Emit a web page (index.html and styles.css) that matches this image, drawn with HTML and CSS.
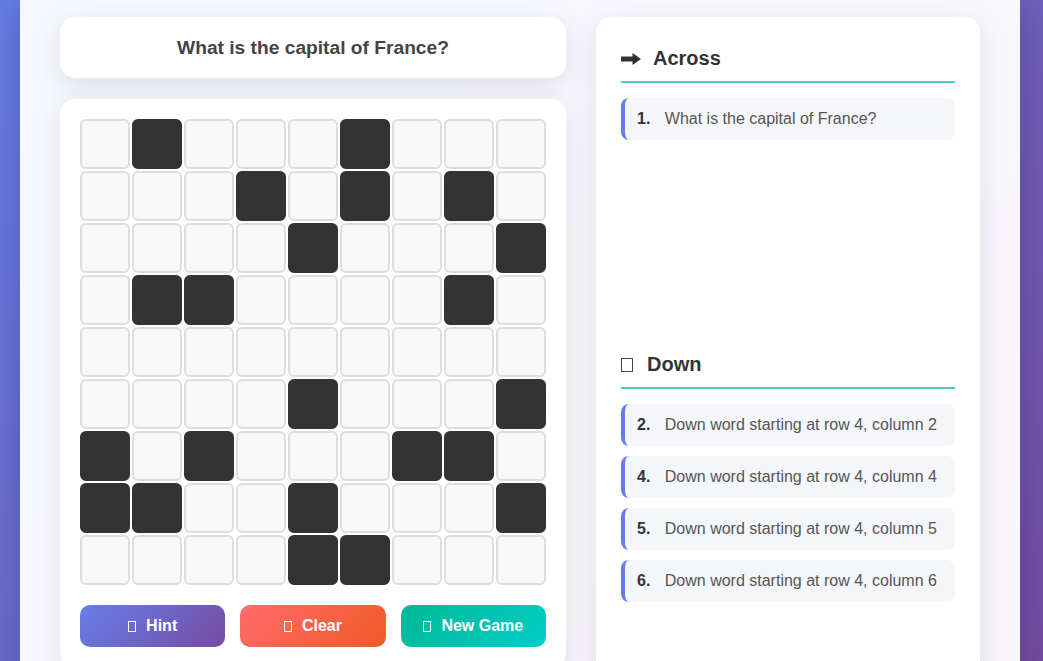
FILE: index.html
```html
<!DOCTYPE html>
<html lang="en">
<head>
<meta charset="utf-8">
<title>Crossword</title>
<link rel="stylesheet" href="styles.css">
</head>
<body>
<div class="container">
  <div class="game">
    <div class="left">
      <div class="card question">What is the capital of France?</div>
      <div class="card board">
        <div class="grid">
          <div class="cell"></div><div class="cell black"></div><div class="cell"></div><div class="cell"></div><div class="cell"></div><div class="cell black"></div><div class="cell"></div><div class="cell"></div><div class="cell"></div>
          <div class="cell"></div><div class="cell"></div><div class="cell"></div><div class="cell black"></div><div class="cell"></div><div class="cell black"></div><div class="cell"></div><div class="cell black"></div><div class="cell"></div>
          <div class="cell"></div><div class="cell"></div><div class="cell"></div><div class="cell"></div><div class="cell black"></div><div class="cell"></div><div class="cell"></div><div class="cell"></div><div class="cell black"></div>
          <div class="cell"></div><div class="cell black"></div><div class="cell black"></div><div class="cell"></div><div class="cell"></div><div class="cell"></div><div class="cell"></div><div class="cell black"></div><div class="cell"></div>
          <div class="cell"></div><div class="cell"></div><div class="cell"></div><div class="cell"></div><div class="cell"></div><div class="cell"></div><div class="cell"></div><div class="cell"></div><div class="cell"></div>
          <div class="cell"></div><div class="cell"></div><div class="cell"></div><div class="cell"></div><div class="cell black"></div><div class="cell"></div><div class="cell"></div><div class="cell"></div><div class="cell black"></div>
          <div class="cell black"></div><div class="cell"></div><div class="cell black"></div><div class="cell"></div><div class="cell"></div><div class="cell"></div><div class="cell black"></div><div class="cell black"></div><div class="cell"></div>
          <div class="cell black"></div><div class="cell black"></div><div class="cell"></div><div class="cell"></div><div class="cell black"></div><div class="cell"></div><div class="cell"></div><div class="cell"></div><div class="cell black"></div>
          <div class="cell"></div><div class="cell"></div><div class="cell"></div><div class="cell"></div><div class="cell black"></div><div class="cell black"></div><div class="cell"></div><div class="cell"></div><div class="cell"></div>
        </div>
        <div class="controls">
          <button class="btn btn-hint"><span class="tofu"></span>Hint</button>
          <button class="btn btn-clear"><span class="tofu"></span>Clear</button>
          <button class="btn btn-new"><span class="tofu"></span>New Game</button>
        </div>
      </div>
    </div>
    <div class="card clues">
      <section class="clue-section">
        <h3 class="clue-heading"><svg class="arrow" width="20" height="12" viewBox="0 0 20 12"><path d="M0 3.5H11.5V0L20 6L11.5 12V8.5H0Z" fill="#333"/></svg>Across</h3>
        <ul class="clue-list">
          <li class="clue"><span class="num">1.</span> What is the capital of France?</li>
        </ul>
      </section>
      <section class="clue-section">
        <h3 class="clue-heading"><span class="tofu tofu-dark"></span>Down</h3>
        <ul class="clue-list">
          <li class="clue"><span class="num">2.</span> Down word starting at row 4, column 2</li>
          <li class="clue"><span class="num">4.</span> Down word starting at row 4, column 4</li>
          <li class="clue"><span class="num">5.</span> Down word starting at row 4, column 5</li>
          <li class="clue"><span class="num">6.</span> Down word starting at row 4, column 6</li>
        </ul>
      </section>
    </div>
  </div>
</div>
</body>
</html>
```

FILE: styles.css
```css
* {
  box-sizing: border-box;
}

html, body {
  margin: 0;
  padding: 0;
}

body {
  font-family: "Liberation Sans", Arial, sans-serif;
  background: linear-gradient(135deg, #667eea 0%, #764ba2 100%);
  min-height: 100vh;
  padding: 0 20px;
  color: #333;
}

.container {
  width: 1000px;
  background: rgba(255, 255, 255, 0.95);
  box-shadow: 0 0 40px rgba(0, 0, 0, 0.22);
  padding: 17px 40px 40px;
}

.game {
  display: grid;
  grid-template-columns: 1fr 384px;
  gap: 30px;
}

.left {
  display: flex;
  flex-direction: column;
  gap: 21px;
}

.card {
  background: #fff;
  border-radius: 15px;
  box-shadow: 0 8px 30px rgba(0, 0, 0, 0.1);
}

.question {
  height: 61px;
  padding: 20px 20px 0;
  text-align: center;
  font-size: 19.2px;
  font-weight: bold;
  line-height: 22px;
  color: #444;
}

.board {
  padding: 20px;
}

.grid {
  display: grid;
  grid-template-columns: repeat(9, 50px);
  grid-auto-rows: 50px;
  gap: 2px;
}

.cell {
  background: #f9f9f9;
  border: 2px solid #ddd;
  border-radius: 6px;
}

.cell.black {
  background: #333;
  border-color: #333;
}

.controls {
  display: flex;
  gap: 15px;
  margin-top: 20px;
}

.btn {
  flex: 1;
  height: 42px;
  border: none;
  border-radius: 10px;
  color: #fff;
  font-family: "Liberation Sans", Arial, sans-serif;
  font-size: 16px;
  font-weight: bold;
  display: flex;
  align-items: center;
  justify-content: center;
  padding: 0;
}

.btn .tofu {
  width: 8px;
  height: 11px;
  border: 1px solid #fff;
  margin-right: 10px;
}

.btn-hint {
  background: linear-gradient(135deg, #667eea 0%, #764ba2 100%);
}

.btn-clear {
  background: linear-gradient(135deg, #ff6b6b 0%, #ee5a24 100%);
}

.btn-new {
  background: linear-gradient(135deg, #00b894 0%, #00cec9 100%);
}

.tofu {
  display: inline-block;
  flex: none;
}

.clues {
  padding: 25px;
}

.clue-section {
  min-height: 306px;
}

.clue-heading {
  margin: 0 0 15px;
  padding-bottom: 7px;
  border-bottom: 2px solid #4ecdc4;
  font-size: 20px;
  line-height: 32px;
  font-weight: bold;
  color: #333;
  display: flex;
  align-items: center;
}

.arrow {
  margin-right: 12px;
  margin-top: 1px;
}

.tofu-dark {
  width: 12px;
  height: 14px;
  border: 1px solid #444;
  margin-right: 14px;
  margin-top: 2px;
}

.clue-list {
  list-style: none;
  margin: 0;
  padding: 0;
}

.clue {
  background: #f5f6fa;
  border-left: 4px solid #667eea;
  border-radius: 8px;
  padding: 12px 12px;
  margin-bottom: 10px;
  font-size: 16px;
  line-height: 18px;
  color: #555;
}

.num {
  font-weight: bold;
  color: #333;
  margin-right: 10px;
}
```
